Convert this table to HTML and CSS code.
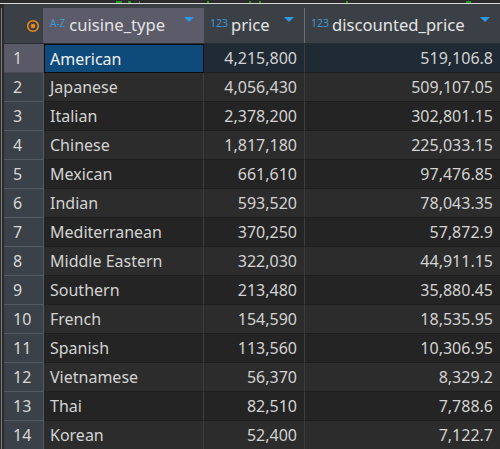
FILE: index.html
```html
<!DOCTYPE html>
<html>
<head>
<meta charset="utf-8">
<link rel="stylesheet" href="styles.css">
</head>
<body>
<div class="topstrip">
  <span class="g g1"></span><span class="g g2"></span><span class="g g3"></span><span class="g g4"></span><span class="g g5"></span><span class="g g6"></span><span class="g g7"></span><span class="g g8"></span>
</div>
<div class="rule"></div>
<div class="frame">
  <div class="gutter"><div class="gline"></div></div>
  <div class="grid">
    <div class="hrow">
      <div class="hcell hnum">
        <svg width="14" height="14" viewBox="0 0 14 14"><circle cx="7" cy="7" r="5.3" fill="none" stroke="#e88a1a" stroke-width="1.6"/><circle cx="7" cy="7" r="2.3" fill="#e88a1a"/></svg>
      </div>
      <div class="hcell hsel"><span class="ico az">A-Z</span><span class="htext">cuisine_type</span><span class="tri"></span></div>
      <div class="hcell hsep"><span class="ico">123</span><span class="htext">price</span><span class="tri"></span></div>
      <div class="hcell"><span class="ico">123</span><span class="htext">discounted_price</span><span class="tri"></span></div>
    </div>
    <div class="row active"><div class="num">1</div><div class="c txt sel">American</div><div class="c n">4,215,800</div><div class="c n">519,106.8</div></div>
    <div class="row even"><div class="num">2</div><div class="c txt">Japanese</div><div class="c n">4,056,430</div><div class="c n">509,107.05</div></div>
    <div class="row odd"><div class="num">3</div><div class="c txt">Italian</div><div class="c n">2,378,200</div><div class="c n">302,801.15</div></div>
    <div class="row even"><div class="num">4</div><div class="c txt">Chinese</div><div class="c n">1,817,180</div><div class="c n">225,033.15</div></div>
    <div class="row odd"><div class="num">5</div><div class="c txt">Mexican</div><div class="c n">661,610</div><div class="c n">97,476.85</div></div>
    <div class="row even"><div class="num">6</div><div class="c txt">Indian</div><div class="c n">593,520</div><div class="c n">78,043.35</div></div>
    <div class="row odd"><div class="num">7</div><div class="c txt">Mediterranean</div><div class="c n">370,250</div><div class="c n">57,872.9</div></div>
    <div class="row even"><div class="num">8</div><div class="c txt">Middle Eastern</div><div class="c n">322,030</div><div class="c n">44,911.15</div></div>
    <div class="row odd"><div class="num">9</div><div class="c txt">Southern</div><div class="c n">213,480</div><div class="c n">35,880.45</div></div>
    <div class="row even"><div class="num">10</div><div class="c txt">French</div><div class="c n">154,590</div><div class="c n">18,535.95</div></div>
    <div class="row odd"><div class="num">11</div><div class="c txt">Spanish</div><div class="c n">113,560</div><div class="c n">10,306.95</div></div>
    <div class="row even"><div class="num">12</div><div class="c txt">Vietnamese</div><div class="c n">56,370</div><div class="c n">8,329.2</div></div>
    <div class="row odd"><div class="num">13</div><div class="c txt">Thai</div><div class="c n">82,510</div><div class="c n">7,788.6</div></div>
    <div class="row even"><div class="num">14</div><div class="c txt">Korean</div><div class="c n">52,400</div><div class="c n">7,122.7</div></div>
  </div>
</div>
</body>
</html>
```
FILE: styles.css
```css
* { box-sizing: border-box; }
html, body { margin: 0; padding: 0; }
body {
  width: 500px;
  height: 449px;
  overflow: hidden;
  background: #2b2b2b;
  font-family: "Noto Sans", "Open Sans", sans-serif;
  color: #d3d3d3;
}
.topstrip {
  height: 3px;
  background: #2b2b2b;
  display: flex;
  align-items: flex-end;
}
.g { display: inline-block; height: 2px; background: #1e9a1e; }
.g1 { margin-left: 116px; width: 6px; }
.g2 { margin-left: 6px; width: 3px; }
.g3 { margin-left: 8px; width: 1px; }
.g4 { margin-left: 67px; width: 2px; }
.g5 { margin-left: 40px; width: 2px; }
.g6 { margin-left: 8px; width: 2px; }
.g7 { margin-left: 85px; width: 2px; }
.g8 { margin-left: 118px; width: 5px; }
.rule { height: 1px; background: #d9d9d9; }
.frame { display: flex; }
.gutter {
  width: 4px;
  padding-top: 4px;
  padding-left: 1px;
  background: #2b2b2b;
}
.gline { width: 1px; height: 100%; background: #7d7d7d; }
.grid {
  flex: 1;
  display: flex;
  flex-direction: column;
  background: #3a3f44;
  padding-top: 4px;
}
.hrow, .row {
  display: grid;
  grid-template-columns: 40px 160px 101px 195px;
}
.hrow { height: 36px; background: #3b4046; border-bottom: 1px solid #2a2d31; }
.hcell {
  position: relative;
  display: flex;
  align-items: center;
  padding-left: 6px;
  font-size: 16.6px;
  color: #e4e4e4;
}
.hnum { justify-content: flex-end; padding-right: 4px; padding-left: 0; }
.hnum svg { margin-top: 1px; }
.hsel { background: #5c5b6a; margin-left: -1px; padding-left: 7px; }
.hsep { border-right: 1px solid #6a6d72; }
.ico {
  font-size: 10.5px;
  color: #3e95d6;
  margin-right: 3px;
  align-self: center;
  margin-top: -5px;
  letter-spacing: 0;
}
.az { font-size: 10px; margin-right: 4px; }
.htext { line-height: 1; }
.tri {
  position: absolute;
  right: 10px;
  top: 9px;
  width: 0; height: 0;
  border-left: 5px solid transparent;
  border-right: 5px solid transparent;
  border-top: 5px solid #2b9ae0;
}
.row { height: 29px; font-size: 16px; }
.row.odd { background: #242424; }
.row.even { background: #2c2c2c; }
.row.active { background: #1f2a35; }
.num {
  background: #3a4148;
  border-right: 1px solid #55595e;
  border-bottom: 1px solid #545b62;
  padding-left: 9px;
  display: flex;
  align-items: center;
  color: #d8d8d8;
}
.row.active .num { background: #5a5967; border-bottom-color: #4a4a55; }
.c {
  display: flex;
  align-items: center;
  border-right: 1px solid #3d3d3d;
  border-bottom: 1px solid #1e1e1e;
  white-space: nowrap;
}
.c:last-child { border-right: none; }
.txt { padding-left: 6px; }
.n { justify-content: flex-end; padding-right: 7px; }
.sel {
  background: #0f4b7a;
  border: 1px solid #0b0b0b;
  color: #f0f0f0;
  padding-left: 5px;
}
```
